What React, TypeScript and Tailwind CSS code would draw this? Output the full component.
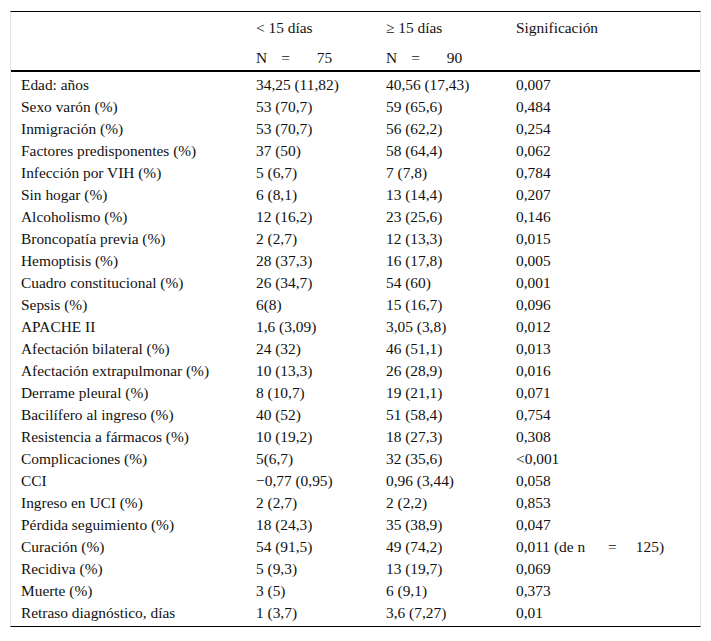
const rows: [string, string, string, string][] = [
  ["Edad: años", "34,25 (11,82)", "40,56 (17,43)", "0,007"],
  ["Sexo varón (%)", "53 (70,7)", "59 (65,6)", "0,484"],
  ["Inmigración (%)", "53 (70,7)", "56 (62,2)", "0,254"],
  ["Factores predisponentes (%)", "37 (50)", "58 (64,4)", "0,062"],
  ["Infección por VIH (%)", "5 (6,7)", "7 (7,8)", "0,784"],
  ["Sin hogar (%)", "6 (8,1)", "13 (14,4)", "0,207"],
  ["Alcoholismo (%)", "12 (16,2)", "23 (25,6)", "0,146"],
  ["Broncopatía previa (%)", "2 (2,7)", "12 (13,3)", "0,015"],
  ["Hemoptisis (%)", "28 (37,3)", "16 (17,8)", "0,005"],
  ["Cuadro constitucional (%)", "26 (34,7)", "54 (60)", "0,001"],
  ["Sepsis (%)", "6(8)", "15 (16,7)", "0,096"],
  ["APACHE II", "1,6 (3,09)", "3,05 (3,8)", "0,012"],
  ["Afectación bilateral (%)", "24 (32)", "46 (51,1)", "0,013"],
  ["Afectación extrapulmonar (%)", "10 (13,3)", "26 (28,9)", "0,016"],
  ["Derrame pleural (%)", "8 (10,7)", "19 (21,1)", "0,071"],
  ["Bacilífero al ingreso (%)", "40 (52)", "51 (58,4)", "0,754"],
  ["Resistencia a fármacos (%)", "10 (19,2)", "18 (27,3)", "0,308"],
  ["Complicaciones (%)", "5(6,7)", "32 (35,6)", "<0,001"],
  ["CCI", "\u22120,77 (0,95)", "0,96 (3,44)", "0,058"],
  ["Ingreso en UCI (%)", "2 (2,7)", "2 (2,2)", "0,853"],
  ["Pérdida seguimiento (%)", "18 (24,3)", "35 (38,9)", "0,047"],
  ["Curación (%)", "54 (91,5)", "49 (74,2)", "__CURACION__"],
  ["Recidiva (%)", "5 (9,3)", "13 (19,7)", "0,069"],
  ["Muerte (%)", "3 (5)", "6 (9,1)", "0,373"],
  ["Retraso diagnóstico, días", "1 (3,7)", "3,6 (7,27)", "0,01"],
];

const cols = "grid grid-cols-[235px_130px_130px_1fr] items-center";

// "N = 75" style cells, with the wide spacing round the equals sign
function NCount({ n }: { n: string }) {
  return (
    <span className="inline-flex items-center">
      <span>N</span>
      <span className="ml-[14px]">=</span>
      <span className="ml-[27px]">{n}</span>
    </span>
  );
}

function DeN() {
  return (
    <span className="inline-flex items-center">
      <span>0,011 (de n</span>
      <span className="ml-[23px]">=</span>
      <span className="ml-[19px]">125)</span>
    </span>
  );
}

export default function App() {
  return (
    <div className="bg-white min-h-[641px] pt-[11px] text-[#111] text-[15.4px] leading-none font-['Liberation_Serif','Times_New_Roman',serif]">
      <div className="ml-[10px] w-[691px] border border-x-[#e4e4e4] border-y-black pb-[4px]">
        <div className={`${cols} h-[30px] pt-[1px]`}>
          <div className="pl-[10px]"></div>
          <div className="pl-[10px]">&lt; 15 días</div>
          <div className="pl-[10px]">≥ 15 días</div>
          <div className="pl-[10px]">Significación</div>
        </div>
        <div className={`${cols} h-[30px] pt-[3px] border-b-2 border-black`}>
          <div className="pl-[10px]"></div>
          <div className="pl-[10px]"><NCount n="75" /></div>
          <div className="pl-[10px]"><NCount n="90" /></div>
          <div className="pl-[10px]"></div>
        </div>
        {rows.map((r) => (
          <div key={r[0]} className={`${cols} h-[22px] pt-[4px]`}>
            <div className="pl-[10px] whitespace-nowrap">{r[0]}</div>
            <div className="pl-[10px] whitespace-nowrap">{r[1]}</div>
            <div className="pl-[10px] whitespace-nowrap">{r[2]}</div>
            <div className="pl-[10px] whitespace-nowrap">
              {r[3] === "__CURACION__" ? <DeN /> : r[3]}
            </div>
          </div>
        ))}
      </div>
    </div>
  );
}
